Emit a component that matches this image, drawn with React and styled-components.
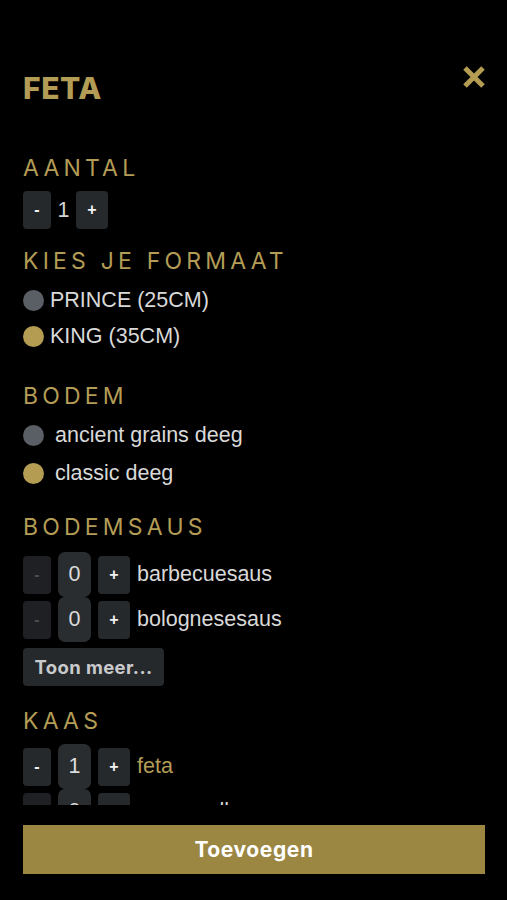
import React from "react";
import styled, { createGlobalStyle } from "styled-components";

const Global = createGlobalStyle`
  html, body { margin: 0; padding: 0; background: #000; }
  * { box-sizing: border-box; }
`;

const GOLD = "#b39c55";

const Page = styled.div`
  height: 100vh;
  width: 100%;
  background: #000;
  display: flex;
  flex-direction: column;
  overflow: hidden;
`;

const Scroll = styled.div`
  flex: 1;
  min-height: 0;
  overflow: hidden;
  padding: 65px 21px 0 23px;
  display: flex;
  flex-direction: column;
  & > * { flex-shrink: 0; }
`;

const Header = styled.div`
  display: flex;
  justify-content: space-between;
  align-items: flex-start;
  height: 37px;
`;

const Title = styled.h1`
  margin: 8px 0 0;
  font-family: "Inter", "Open Sans", sans-serif;
  font-weight: 800;
  font-size: 30px;
  line-height: 1;
  color: ${GOLD};
  letter-spacing: 0.6px;
`;

const Close = styled.button`
  background: none;
  border: 0;
  padding: 0;
  width: 24px;
  height: 24px;
  cursor: pointer;
  display: flex;
`;

const Heading = styled.h2`
  margin: ${(p) => p.$mt}px 0 0;
  font-family: "Inter", "Open Sans", sans-serif;
  font-weight: 400;
  font-size: 23px;
  line-height: 22px;
  height: 22px;
  letter-spacing: 4.2px;
  color: ${GOLD};
  text-transform: uppercase;
`;

const QtyRow = styled.div`
  display: flex;
  align-items: center;
  height: 38px;
  margin-top: 12px;
`;

const StepBtn = styled.button`
  width: ${(p) => p.$w}px;
  height: 38px;
  border: 0;
  border-radius: 4px;
  background: ${(p) => (p.$disabled ? "#1e2023" : "#26292c")};
  color: ${(p) => (p.$disabled ? "#4a4d50" : "#f2f2f2")};
  font-family: "Liberation Sans", Arial, sans-serif;
  font-weight: 700;
  font-size: 16px;
  padding: 0;
  display: flex;
  align-items: center;
  justify-content: center;
  flex: none;
`;

const QtyValue = styled.span`
  width: 25px;
  text-align: center;
  font-family: "Liberation Sans", Arial, sans-serif;
  font-size: 21.5px;
  color: #d5d5d5;
`;

const RadioList = styled.div`
  display: flex;
  flex-direction: column;
  gap: ${(p) => p.$gap}px;
  margin-top: ${(p) => p.$mt}px;
`;

const RadioRow = styled.label`
  display: flex;
  align-items: center;
  gap: ${(p) => p.$gap}px;
  height: 22px;
  font-family: "Liberation Sans", Arial, sans-serif;
  font-size: 21.5px;
  color: #d9d9d9;
`;

const Dot = styled.span`
  width: 21px;
  height: 21px;
  border-radius: 50%;
  background: ${(p) => (p.$on ? "#b49c52" : "#5a5e65")};
  flex: none;
`;

const CounterList = styled.div`
  display: flex;
  flex-direction: column;
  margin-top: ${(p) => p.$mt}px;
`;

const CounterRow = styled.div`
  display: flex;
  align-items: center;
  gap: 6px;
  height: 45px;
`;

const ValueBox = styled.div`
  width: 33px;
  height: 45px;
  border-radius: 7px;
  background: #2a2d30;
  display: flex;
  align-items: center;
  justify-content: center;
  font-family: "Liberation Sans", Arial, sans-serif;
  font-size: 21.5px;
  color: #dcdcdc;
  margin: 0 1px;
  flex: none;
`;

const CounterLabel = styled.span`
  margin-left: 1px;
  font-family: "Liberation Sans", Arial, sans-serif;
  font-size: 21.5px;
  color: ${(p) => (p.$active ? GOLD : "#d9d9d9")};
`;

const MoreBtn = styled.button`
  align-self: flex-start;
  margin-top: 6px;
  height: 38px;
  width: 141px;
  padding: 0;
  border: 0;
  border-radius: 4px;
  background: #26292c;
  color: #c9cacc;
  font-family: "Inter", "Open Sans", sans-serif;
  font-weight: 700;
  font-size: 18.5px;
  letter-spacing: 0.4px;
`;

const Footer = styled.div`
  padding: 20px 22px 26px 23px;
  flex: none;
`;

const AddBtn = styled.button`
  width: 100%;
  height: 49px;
  border: 0;
  background: #9b8642;
  color: #fff;
  font-family: "Inter", "Open Sans", sans-serif;
  font-weight: 700;
  font-size: 21px;
  letter-spacing: 0.6px;
`;

function Counter({ value, label, active }) {
  return (
    <CounterRow>
      <StepBtn $w={28} $disabled={value === 0}>-</StepBtn>
      <ValueBox>{value}</ValueBox>
      <StepBtn $w={32}>+</StepBtn>
      <CounterLabel $active={active}>{label}</CounterLabel>
    </CounterRow>
  );
}

export default function App() {
  return (
    <>
      <Global />
      <Page>
        <Scroll>
          <Header>
            <Title>FETA</Title>
            <Close aria-label="Sluiten">
              <svg width="24" height="24" viewBox="0 0 24 24">
                <path d="M3 3 L21 21 M21 3 L3 21" stroke="#b49c52" strokeWidth="5" strokeLinecap="butt" fill="none" />
              </svg>
            </Close>
          </Header>

          <Heading $mt={55}>Aantal</Heading>
          <QtyRow>
            <StepBtn $w={28}>-</StepBtn>
            <QtyValue>1</QtyValue>
            <StepBtn $w={32}>+</StepBtn>
          </QtyRow>

          <Heading $mt={21}>Kies je formaat</Heading>
          <RadioList $mt={17} $gap={14}>
            <RadioRow $gap={6}><Dot />PRINCE (25CM)</RadioRow>
            <RadioRow $gap={6}><Dot $on />KING (35CM)</RadioRow>
          </RadioList>

          <Heading $mt={38}>Bodem</Heading>
          <RadioList $mt={17} $gap={16}>
            <RadioRow $gap={11}><Dot />ancient grains deeg</RadioRow>
            <RadioRow $gap={11}><Dot $on />classic deeg</RadioRow>
          </RadioList>

          <Heading $mt={32}>Bodemsaus</Heading>
          <CounterList $mt={14}>
            <Counter value={0} label="barbecuesaus" />
            <Counter value={0} label="bolognesesaus" />
          </CounterList>
          <MoreBtn>Toon meer...</MoreBtn>

          <Heading $mt={24}>Kaas</Heading>
          <CounterList $mt={12}>
            <Counter value={1} label="feta" active />
            <Counter value={0} label="mozzarella" />
            <Counter value={0} label="geitenkaas" />
          </CounterList>
        </Scroll>
        <Footer>
          <AddBtn>Toevoegen</AddBtn>
        </Footer>
      </Page>
    </>
  );
}
